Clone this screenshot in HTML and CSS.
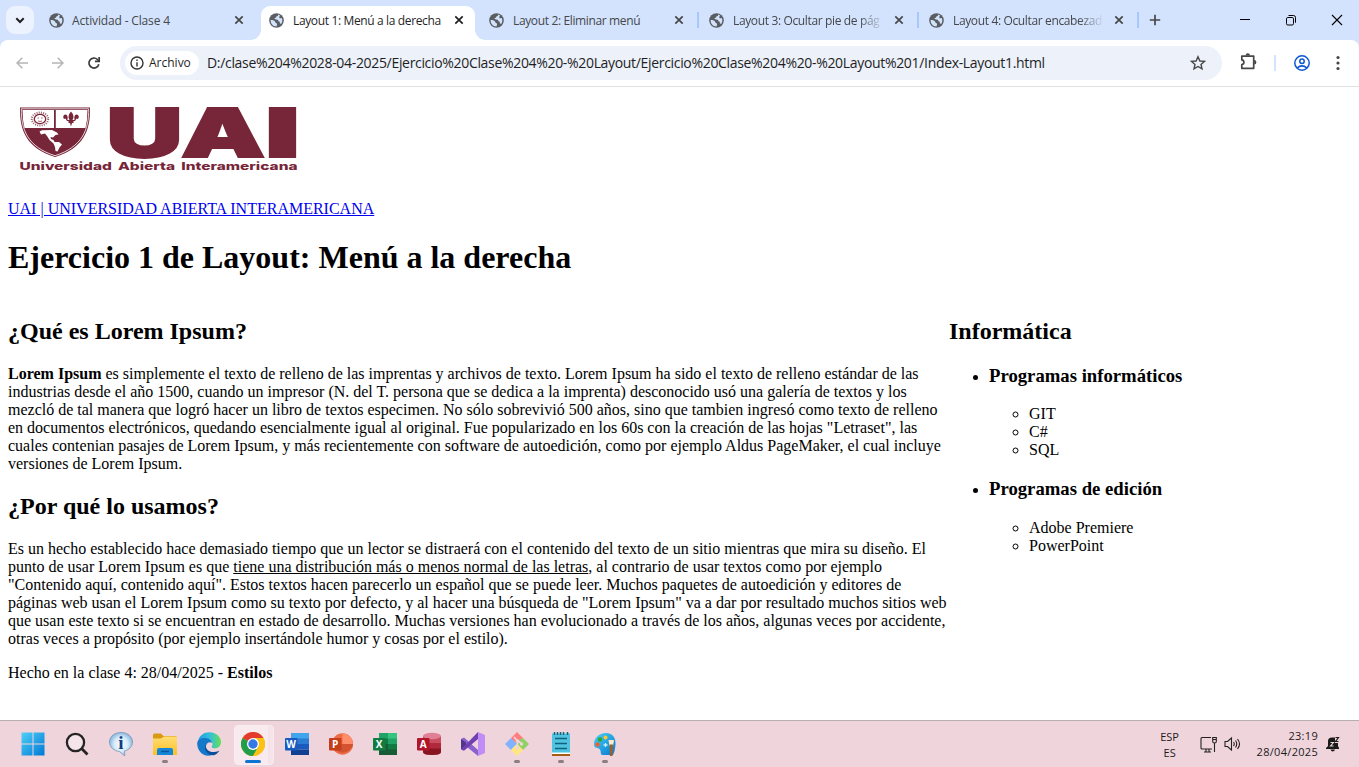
FILE: index.html
```html
<!DOCTYPE html>
<html lang="es">
<head>
<meta charset="utf-8">
<title>Layout 1: Menú a la derecha</title>
<link rel="stylesheet" href="styles.css">
</head>
<body>
<svg class="defs" width="0" height="0">
  <symbol id="globe" viewBox="0 0 16 16"><circle cx="8" cy="8" r="7.800" fill="#5a5e63"/><path d="M9.600 1.700C10 3.200 9 3.700 7.800 3.800C7.600 5 7 5.300 6 5.400C5.800 6.500 6.300 6.900 7.600 6.900C9.500 6.800 10 7.600 10 8.800C11.500 8.800 11.800 9.800 11.500 11L13 11.600C14.300 9.500 14.600 7.200 13.700 5.200C12.900 5.700 11.400 5.800 11 5C10.700 4 11.300 3.300 12 2.900C11.300 2.300 10.500 1.900 9.600 1.700ZM1.800 7.400C3.500 7.300 6.200 8 6.700 9.500C6.800 10.600 7.600 10.600 8.200 11C9 11.700 8.500 12.500 8 14.300C4.300 14.300 1.500 11.300 1.800 7.400Z" fill="#d3e3fd"/></symbol>
  <symbol id="close" viewBox="0 0 10 10"><path d="M1.300 1.300L8.700 8.700M8.700 1.300L1.300 8.700" stroke="currentColor" stroke-width="1.700"/></symbol>
</svg>

<header class="browser">
  <div class="tabstrip">
    <button class="tab-search"><svg width="10" height="7" viewBox="0 0 10 7"><path d="M1.300 1.300L5 5L8.700 1.300" fill="none" stroke="#202124" stroke-width="2"/></svg></button>
    <div class="tab"><svg class="fav"><use href="#globe"/></svg><span class="tab-title t1">Actividad - Clase 4</span><svg class="x"><use href="#close"/></svg></div>
    <div class="tab active"><svg class="fav"><use href="#globe"/></svg><span class="tab-title">Layout 1: Menú a la derecha</span><svg class="x"><use href="#close"/></svg></div>
    <div class="tab sep"><svg class="fav"><use href="#globe"/></svg><span class="tab-title">Layout 2: Eliminar menú</span><svg class="x"><use href="#close"/></svg></div>
    <div class="tab sep"><svg class="fav"><use href="#globe"/></svg><span class="tab-title fade">Layout 3: Ocultar pie de pág</span><svg class="x"><use href="#close"/></svg></div>
    <div class="tab sep"><svg class="fav"><use href="#globe"/></svg><span class="tab-title fade">Layout 4: Ocultar encabezad</span><svg class="x"><use href="#close"/></svg></div>
    <svg class="plus" width="12" height="12" viewBox="0 0 12 12"><path d="M6 .8V11.200M.8 6H11.200" stroke="#474747" stroke-width="1.700"/></svg>
    <div class="window-buttons">
      <svg width="46" height="40"><path d="M18 19.500H28" stroke="#000"/></svg>
      <svg width="46" height="40" fill="none" stroke="#000"><rect x="18.500" y="17.500" width="7" height="7.500" rx="1.300"/><path d="M20.500 15.500H25.500Q27.500 15.500 27.500 17.500V22.700"/></svg>
      <svg width="46" height="40"><path d="M18 15L28 25M28 15L18 25" stroke="#000" stroke-width="1.100"/></svg>
    </div>
  </div>
  <div class="toolbar">
    <svg class="nav" width="12" height="12" viewBox="0 0 12 12" fill="none" stroke="#b4b5b7" stroke-width="1.500"><path d="M12 6H1M6.300 .7L1 6L6.300 11.300"/></svg>
    <svg class="nav" width="12" height="12" viewBox="0 0 12 12" fill="none" stroke="#b4b5b7" stroke-width="1.500"><path d="M0 6H11M5.700 .7L11 6L5.700 11.300"/></svg>
    <svg class="nav reload" width="14" height="14" viewBox="0 0 14 14" fill="none" stroke="#3c3c3c" stroke-width="1.700"><path d="M11.800 8.200A5 5 0 1 1 10.500 3.500L12 5"/><path d="M12.200 1V5.300H7.900"/></svg>
    <div class="omnibox">
      <span class="chip"><svg width="14" height="14" viewBox="0 0 14 14"><circle cx="7" cy="7" r="6" fill="none" stroke="#333" stroke-width="1.400"/><path d="M7 6.200V10.400M7 3.500V5" stroke="#333" stroke-width="1.400"/></svg><b>Archivo</b></span>
      <span class="url">D:/clase%204%2028-04-2025/Ejercicio%20Clase%204%20-%20Layout/Ejercicio%20Clase%204%20-%20Layout%201/Index-Layout1.html</span>
      <svg class="star" width="16" height="16" viewBox="0 0 16 16"><path d="M8 1.700L9.900 6L14.400 6.400L11 9.400L12 13.900L8 11.500L4 13.900L5 9.400L1.600 6.400L6.100 6Z" fill="none" stroke="#474747" stroke-width="1.400"/></svg>
    </div>
    <svg class="puzzle" width="17" height="17" viewBox="0 0 17 17"><path d="M1.800 3.100H13.700V15.300H1.800V11.500Q3.900 11.200 3.900 9.200T1.800 6.900Z" fill="none" stroke="#474747" stroke-width="1.700" stroke-linejoin="round"/><path d="M5.600 2.500A2.200 2.200 0 0 1 10 2.500ZM14.200 7A2.200 2.200 0 0 1 14.200 11.400Z" fill="#474747"/></svg>
    <i class="divider"></i>
    <svg class="profile" width="16" height="16" viewBox="0 0 16 16" fill="none" stroke="#0b57d0" stroke-width="1.500"><circle cx="8" cy="8" r="7.200"/><circle cx="8" cy="6.300" r="2.200"/><path d="M3 13Q8 8.700 13 13"/></svg>
    <svg class="kebab" width="4" height="16" viewBox="0 0 4 16" fill="#474747"><circle cx="2" cy="2.500" r="1.600"/><circle cx="2" cy="8" r="1.600"/><circle cx="2" cy="13.500" r="1.600"/></svg>
  </div>
</header>

<main class="page">
  <svg class="logo" width="300" height="85" viewBox="8 95 300 85">
    <g fill="#772538">
      <path d="M20 107.500H90C90.500 130 84 148 55 157C26 148 19.500 130 20 107.500Z"/>
      <path d="M21.300 108.800H88.700C89 130 82 147 55 155.700C28 147 21 130 21.300 108.800Z" fill="none" stroke="#fff" stroke-width=".8"/>
      <path d="M22.500 110H54V128H24.500Q22.500 120 22.500 110ZM55.800 110H87.500Q87.500 120 85.500 128H55.800Z" fill="#fff"/>
      <ellipse cx="40" cy="119" rx="5.700" ry="4.600" fill="none" stroke="#772538" stroke-width="1.300"/>
      <ellipse cx="40" cy="119" rx="8.200" ry="6.500" fill="none" stroke="#772538" stroke-width="2" stroke-dasharray="1 1.200" opacity=".75"/>
      <path d="M37.500 118H39M41 118H42.500M38 121Q40 122 42 121" fill="none" stroke="#772538" stroke-width=".7"/>
      <path d="M71 111.500Q75 116 72.500 120H74.500Q73.500 114.500 77 114.500Q80 116 78 119L76.500 118.500L75 121H73.500V123H72L71 126.500L70 123H68.500V121H67L65.500 118.500L64 119Q62 116 65 114.500Q68.500 114.500 67.500 120H69.500Q67 116 71 111.500Z"/>
      <path d="M39.500 131.500L42 130.200L52 130L57 132.500L58.500 134.500L55.500 135L53 137.500L50.500 137L51 139L53.500 140L54.500 142L59 142L62 144.500L59.500 147.500L57.500 151.500L55.500 151L55 147L53.500 143.500L49.500 140L47 136L45 133.500L41 134.500Z" fill="#fff"/>
      <text class="logo-letters" y="157.300"><tspan x="106.500" textLength="76" lengthAdjust="spacingAndGlyphs">U</tspan><tspan x="181" textLength="84" lengthAdjust="spacingAndGlyphs">A</tspan><tspan x="265" textLength="35" lengthAdjust="spacingAndGlyphs">I</tspan></text>
      <text class="logo-name" x="19.500" y="170" textLength="278" lengthAdjust="spacingAndGlyphs">Universidad Abierta Interamericana</text>
    </g>
  </svg>
  <p class="link"><a href="#">UAI | UNIVERSIDAD ABIERTA INTERAMERICANA</a></p>
  <h1>Ejercicio 1 de Layout: Menú a la derecha</h1>
  <div class="columns">
    <section>
      <h2>¿Qué es Lorem Ipsum?</h2>
      <p><b>Lorem Ipsum</b> es simplemente el texto de relleno de las imprentas y archivos de texto. Lorem Ipsum ha sido el texto de relleno estándar de las<br>industrias desde el año 1500, cuando un impresor (N. del T. persona que se dedica a la imprenta) desconocido usó una galería de textos y los<br>mezcló de tal manera que logró hacer un libro de textos especimen. No sólo sobrevivió 500 años, sino que tambien ingresó como texto de relleno<br>en documentos electrónicos, quedando esencialmente igual al original. Fue popularizado en los 60s con la creación de las hojas "Letraset", las<br>cuales contenian pasajes de Lorem Ipsum, y más recientemente con software de autoedición, como por ejemplo Aldus PageMaker, el cual incluye<br>versiones de Lorem Ipsum.</p>
      <h2>¿Por qué lo usamos?</h2>
      <p>Es un hecho establecido hace demasiado tiempo que un lector se distraerá con el contenido del texto de un sitio mientras que mira su diseño. El<br>punto de usar Lorem Ipsum es que <u>tiene una distribución más o menos normal de las letras</u>, al contrario de usar textos como por ejemplo<br>"Contenido aquí, contenido aquí". Estos textos hacen parecerlo un español que se puede leer. Muchos paquetes de autoedición y editores de<br>páginas web usan el Lorem Ipsum como su texto por defecto, y al hacer una búsqueda de "Lorem Ipsum" va a dar por resultado muchos sitios web<br>que usan este texto si se encuentran en estado de desarrollo. Muchas versiones han evolucionado a través de los años, algunas veces por accidente,<br>otras veces a propósito (por ejemplo insertándole humor y cosas por el estilo).</p>
    </section>
    <aside>
      <h2>Informática</h2>
      <ul>
        <li><h3>Programas informáticos</h3><ul><li>GIT</li><li>C#</li><li>SQL</li></ul></li>
        <li><h3>Programas de edición</h3><ul><li>Adobe Premiere</li><li>PowerPoint</li></ul></li>
      </ul>
    </aside>
  </div>
  <p>Hecho en la clase 4: 28/04/2025 - <b>Estilos</b></p>
</main>

<footer class="taskbar">
  <svg class="defs" width="0" height="0"><defs>
    <linearGradient id="win" x1="0" y1="0" x2="1" y2="1"><stop offset="0" stop-color="#4fd0f8"/><stop offset="1" stop-color="#0078d4"/></linearGradient>
    <linearGradient id="edge" x1="0" y1="0" x2="1" y2="0"><stop offset="0" stop-color="#1a9be4"/><stop offset=".55" stop-color="#35c1d8"/><stop offset="1" stop-color="#66e04f"/></linearGradient>
    <linearGradient id="folder" x1="0" y1="0" x2="0" y2="1"><stop offset="0" stop-color="#ffdd75"/><stop offset="1" stop-color="#fbc022"/></linearGradient>
    <radialGradient id="bubble"><stop offset="0" stop-color="#fff"/><stop offset=".6" stop-color="#d5ecfb"/><stop offset="1" stop-color="#8fb9dc"/></radialGradient>
    <linearGradient id="paint" x1="0" y1="0" x2="1" y2="1"><stop offset="0" stop-color="#45d4f4"/><stop offset="1" stop-color="#0875d1"/></linearGradient>
  </defs></svg>
  <nav class="apps">
    <span class="app"><svg viewBox="0 0 24 24"><path d="M.5 .5H11.500V11.500H.5ZM12.500 .5H23.500V11.500H12.500ZM.5 12.500H11.500V23.500H.5ZM12.500 12.500H23.500V23.500H12.500Z" fill="url(#win)"/></svg></span>
    <span class="app"><svg viewBox="0 0 24 24" fill="none" stroke="#242424" stroke-width="2.300"><circle cx="10.500" cy="10.500" r="8.600" fill="#f5e4ea"/><path d="M16.600 16.600L22.500 22.500" stroke-width="2.800"/></svg></span>
    <span class="app"><svg viewBox="0 0 24 24"><path d="M12 .5C18.500 .5 23.500 4.500 23.500 10C23.500 14.500 20 18 15.500 19L15.800 24L10.500 19.500C5 19 .5 15 .5 10C.5 4.500 5.500 .5 12 .5Z" fill="url(#bubble)" stroke="#7497b9" stroke-width=".8"/><text class="info" x="12" y="16.500">i</text></svg></span>
    <span class="app open"><svg viewBox="0 0 24 24"><path d="M0 3Q0 1.500 1.500 1.500H8L10.500 4H22.500Q24 4 24 5.500V12H0Z" fill="#d99a12"/><path d="M0 6.500H8L11 4.500H24V23H0Z" fill="url(#folder)"/><path d="M4 23V18Q4 16 6 16H18Q20 16 20 18V23Z" fill="#1686d9"/><path d="M8 19.500H16" stroke="#0b5698" stroke-width="1.500"/></svg></span>
    <span class="app"><svg viewBox="0 0 24 24"><path d="M1 9.500C2 3.500 7 .2 12.500 .2C20 .2 24 5.500 24 10C24 14.500 20.500 16.500 17.500 16.300C14.500 16.200 14.200 14.800 15.200 13.500C16.500 11.500 14.500 8 11 8C7 8 1 9 .4 13Z" fill="url(#edge)"/><path d="M.2 12C0 8 4 5.700 8.500 6C12 6.200 15 8.500 15 11C13 9.500 9.500 10.500 9 14C8.500 18 12 22 16 22.500C8 26.500 .5 20 .2 12Z" fill="#1479c9"/><path d="M9.500 12C7 17 12.500 20.500 17.500 20Q20.500 19.600 22.500 18.500Q20 22.500 16.500 23.200C10 23.500 5.500 16.500 9.500 12Z" fill="#0c4e99"/></svg></span>
    <span class="app open current"><svg viewBox="0 0 24 24"><circle cx="12" cy="12" r="12" fill="#fbc116"/><path d="M12 12L1.600 6A12 12 0 0 1 22.400 6Z" fill="#e33b2e"/><path d="M1.600 6A12 12 0 0 0 12 24L17.200 15L12 12Z" fill="#229d4b"/><path d="M12 6H22.400A12 12 0 0 1 12 24L17.200 15Z" fill="#fbc116"/><circle cx="12" cy="12" r="6" fill="#fff"/><circle cx="12" cy="12" r="4.700" fill="#3478e5"/></svg></span>
    <span class="app"><svg viewBox="0 0 24 24"><path d="M6 1H24V7H6Z" fill="#41a5ee"/><path d="M6 6.500H24V12H6Z" fill="#2b7cd3"/><path d="M6 12H24V17.500H6Z" fill="#185abd"/><path d="M6 17.500H24V23H6Z" fill="#103f91"/><rect y="6" width="12.500" height="12.500" rx="1" fill="#185abd"/><text class="office" x="6.200" y="15.800">W</text></svg></span>
    <span class="app"><svg viewBox="0 0 24 24"><circle cx="13.500" cy="12" r="10.700" fill="#ed6c47"/><path d="M13.500 1.300A10.700 10.700 0 0 1 24 12H13.500Z" fill="#ff8f6b"/><path d="M3 12H24A10.700 10.700 0 0 1 3 12Z" fill="#d35230"/><rect y="6" width="12.500" height="12.500" rx="1" fill="#c43e1c"/><text class="office" x="6.200" y="15.800">P</text></svg></span>
    <span class="app"><svg viewBox="0 0 24 24"><path d="M6 1H15V7H6Z" fill="#21a366"/><path d="M15 1H24V7H15Z" fill="#33c481"/><path d="M6 6.500H15V12H6Z" fill="#107c41"/><path d="M15 6.500H24V12H15Z" fill="#21a366"/><path d="M6 12H24V23H6Z" fill="#185c37"/><path d="M15 12H24V17.500H15Z" fill="#107c41"/><rect y="6" width="12.500" height="12.500" rx="1" fill="#107c41"/><text class="office" x="6.200" y="15.800">X</text></svg></span>
    <span class="app"><svg viewBox="0 0 24 24"><path d="M6 4V20Q6 23 15 23T24 20V4Z" fill="#c94f60"/><path d="M6 11H24V17H6Z" fill="#b02a3c"/><path d="M6 16.500H24V20Q24 23 15 23T6 20Z" fill="#881421"/><ellipse cx="15" cy="4" rx="9" ry="3.300" fill="#e08095"/><rect y="6" width="12.500" height="12.500" rx="1" fill="#b0152a"/><text class="office" x="6.200" y="15.800">A</text></svg></span>
    <span class="app"><svg viewBox="0 0 24 24"><path d="M0 7L3 5.500L17 18V24L0 10Z" fill="#8a60cf"/><path d="M0 7L5 10.500V14L0 17.500Z" fill="#54358c"/><path d="M0 17.500L17 0V7L3 18.700Z" fill="#7141b3"/><path d="M17 0L24 3V21L17 24Z" fill="#c08cf5"/></svg></span>
    <span class="app open"><svg viewBox="0 0 24 24"><path d="M12 0L18 6L12 12L9.500 9.500A2 2 0 0 1 7 7L6 6Z" fill="#ff7f7f"/><path d="M6 6L12 12L9.500 14L6 18L0 12Z" fill="#80b3ff"/><path d="M18 6L24 12L18 18L12 12L14 10V8Z" fill="#8ed165"/><path d="M12 12L18 18L12 24L6 18Z" fill="#ffe680"/><path d="M9 5L12.500 9V16M13 9L17 12" fill="none" stroke="#f0d4dc" stroke-width="1.600"/><circle cx="12.500" cy="9" r="1.700" fill="#f0d4dc"/><circle cx="16.500" cy="12" r="1.700" fill="#f0d4dc"/><circle cx="12.500" cy="16" r="1.700" fill="#f0d4dc"/></svg></span>
    <span class="app open"><svg viewBox="0 0 24 24"><rect x="3" y="1.500" width="18" height="20" fill="#4fc3df"/><path d="M5.500 0V3M8.500 0V3M11.500 0V3M14.500 0V3M18.500 0V3" stroke="#15637c" stroke-width="1.500"/><path d="M6 6.500H18M6 11.500H18M6 16.500H18" stroke="#11627c" stroke-width="1.300"/><path d="M3 20.500H21V22H3Z" fill="#fff"/><path d="M3 22H21V24H3Z" fill="#a85b13"/></svg></span>
    <span class="app open"><svg viewBox="0 0 24 24"><path d="M13 1C20 1 23 6 22.500 13Q22 19 20 23H9C7 22 8.500 19 6.500 17C4 15 1 17 1 12C1 6 6 1 13 1Z" fill="url(#paint)"/><circle cx="7" cy="7.500" r="2.300" fill="#31a530"/><circle cx="12.500" cy="5.500" r="2" fill="#ffc62e"/><circle cx="4.500" cy="12.500" r="2.200" fill="#ed622c"/><path d="M12.500 11V15M10.500 13H14.500" stroke="#c9f1ff" stroke-width="1.300"/><path d="M15.500 8H21L20 14H16.500Z" fill="#ffe9c8"/><path d="M16.500 12.500H20L19.500 24H17Z" fill="#9b6128"/></svg></span>
  </nav>
  <div class="tray">
    <div class="lang">ESP<br>ES</div>
    <svg class="network" width="17" height="17" viewBox="0 0 17 17" fill="none" stroke="#222" stroke-width="1.100"><path d="M11 1.500H2Q1 1.500 1 2.500V12Q1 13 2 13H12M4 16H11M6 13V16M9 13V16M14.500 7V16"/><path d="M12.700 1.500H16.300V5.500Q16.300 7 14.500 7T12.700 5.500ZM12.700 3.500H16.300"/></svg>
    <svg class="sound" width="17" height="16" viewBox="0 0 17 16" fill="none" stroke="#222" stroke-width="1.100"><path d="M1 5.500H3.500L7.500 2V14L3.500 10.500H1ZM9.500 6Q11 8 9.500 10M11.500 4.500Q14 8 11.500 11.500M13.500 3Q17.500 8 13.500 13"/></svg>
    <div class="clock"><span>23:19</span><span>28/04/2025</span></div>
    <svg class="bell" width="14" height="16" viewBox="0 0 14 16"><path d="M0 12L2 10V5Q2 1.500 6 1.500H9V7H12V10L13 12V13H0ZM4.500 13.500H9Q8.500 15.500 6.800 15.500T4.500 13.500Z" fill="#1b1b1b"/><path d="M4.500 6.500H7.500L4.500 10H7.500" fill="none" stroke="#f0d4dc" stroke-width="1.100"/><path d="M9.500 1.500H12.500L9.500 5.500H12.500" fill="none" stroke="#1b1b1b" stroke-width="1.200"/></svg>
  </div>
</footer>
</body>
</html>
```
FILE: styles.css
```css
* { box-sizing: border-box; }
body {
  margin: 0;
  width: 1359px;
  height: 767px;
  overflow: hidden;
  display: flex;
  flex-direction: column;
  background: #fff;
  color: #000;
  font: 16px/18px "Liberation Serif", serif;
}
svg { display: block; flex: none; }
.defs { position: absolute; }

.browser { flex: none; font-family: "Open Sans", "Noto Sans", sans-serif; background: #d3e3fd; }
.tabstrip { height: 40px; display: flex; align-items: center; padding-left: 6px; }
.tab-search {
  width: 28px; height: 28px; margin-right: 8px; padding: 0;
  border: 0; border-radius: 9px; background: #ecf2fe;
  display: flex; align-items: center; justify-content: center;
}
.tab {
  position: relative;
  width: 220px; height: 40px; flex: none;
  display: flex; align-items: center;
  padding-left: 7px;
  color: #45474a;
  font-size: 12px; line-height: 18px;
}
.fav { width: 15px; height: 15px; margin-right: 9px; }
.tab-title { width: 152px; padding-top: 1px; white-space: nowrap; letter-spacing: -0.36px; }
.t1 { margin-left: -1px; margin-right: 1px; letter-spacing: -0.15px; }
.fade { -webkit-mask-image: linear-gradient(to right, #000 126px, transparent 151px); mask-image: linear-gradient(to right, #000 126px, transparent 151px); }
.x { width: 10px; height: 10px; margin-left: 9px; color: #474747; }
.active { color: #1f1f1f; }
.active > * { z-index: 1; }
.active .x { color: #1f1f1f; }
.active::before {
  content: ""; position: absolute; left: -1px; top: 6px; width: 214px; height: 34px;
  border-radius: 9px 9px 0 0; background: #fff;
}
.active::after {
  content: ""; position: absolute; left: -11px; bottom: 0; width: 234px; height: 10px;
  background:
    radial-gradient(circle at 0 0, transparent 9.500px, #fff 10px) left / 10px 10px no-repeat,
    radial-gradient(circle at 100% 0, transparent 9.500px, #fff 10px) right / 10px 10px no-repeat;
}
.sep { background: linear-gradient(#a8c7fa, #a8c7fa) 215px 12px / 2px 16px no-repeat; }
.plus { margin-left: 7px; }
.window-buttons { display: flex; margin-left: auto; margin-right: -1px; }

.toolbar {
  height: 47px; padding: 0 19px 0 16px;
  display: flex; align-items: center;
  background: #fff; border-bottom: 1px solid #dfe1e5; border-radius: 8px 8px 0 0;
}
.nav { margin-right: 24px; }
.reload { margin: 0 19px 0 -1px; }
.omnibox {
  width: 1102px; height: 34px; padding: 0 16px 0 5px;
  display: flex; align-items: center;
  border-radius: 17px; background: #ecf1fa; color: #1f1f1f;
}
.chip {
  width: 74px; height: 24px; padding-left: 5px; gap: 5px;
  display: flex; align-items: center;
  border-radius: 12px; background: #fff; font-size: 12px;
}
.chip b { font-weight: 500; }
.url { margin-left: 8px; font-size: 14px; white-space: nowrap; letter-spacing: -0.325px; }
.star { margin-left: auto; }
.puzzle { margin: -3px 0 0 18px; }
.divider { width: 2px; height: 16px; margin-left: 17px; background: #d3e3fd; }
.profile { margin-left: 18px; }
.kebab { margin-left: auto; }

.page { flex: 1; padding: 8px 8px 0; white-space: nowrap; }
.logo-letters { font: 900 67px Inter, sans-serif; stroke: #772538; stroke-width: 2px; }
.logo-name { font: 800 11px Inter, sans-serif; word-spacing: 2px; }
.link { margin: 20px 0 0; }
a { color: #0000ee; }
h1 { margin: 21.440px 0; font-size: 32px; line-height: 37px; }
h2 { margin: 19.920px 0; font-size: 24px; line-height: 27px; }
h3 { margin: 18.720px 0; font-size: 18.720px; line-height: 22px; }
.page p { margin-bottom: 0; }
.columns { display: grid; grid-template-columns: 941px 1fr; }
.columns h2:first-child { margin-top: 19.920px; }
.columns ul { margin: 0; padding-left: 40px; }

.taskbar {
  flex: none; height: 47px; padding: 0 19px 0 11px;
  display: flex; justify-content: space-between;
  border-top: 1px solid #b9adb2; background: #f0d4dc;
}
.apps { display: flex; }
.app { position: relative; width: 44px; height: 46px; display: flex; align-items: center; justify-content: center; }
.app svg { position: relative; width: 24px; height: 24px; }
.open::after {
  content: ""; position: absolute; left: 19px; bottom: 4px; width: 6px; height: 3px;
  border-radius: 2px; background: #8d7d84;
}
.current::before {
  content: ""; position: absolute; left: 3px; top: 4px; width: 38px; height: 38px;
  border-radius: 4px; background: linear-gradient(to right, #f9eaef 33px, #eedde2 34px, #f6e4ea 35px); border: 1px solid #f8edf0;
}
.current::after { left: 14px; width: 16px; background: #0f74d0; }
.office { font: 700 10px "Open Sans", sans-serif; fill: #fff; text-anchor: middle; }
.info { font: 700 19px "Liberation Serif", serif; fill: #123c86; text-anchor: middle; }
.tray { display: flex; align-items: center; color: #1b1b1b; font: 11px/16px "Open Sans", sans-serif; }
.lang { width: 22px; text-align: center; margin-right: 19px; padding-top: 1px; }
.network { margin-right: 7px; }
.sound { margin-right: 16px; }
.clock { display: flex; flex-direction: column; align-items: flex-end; margin-right: 8px; letter-spacing: 0.300px; }
```
